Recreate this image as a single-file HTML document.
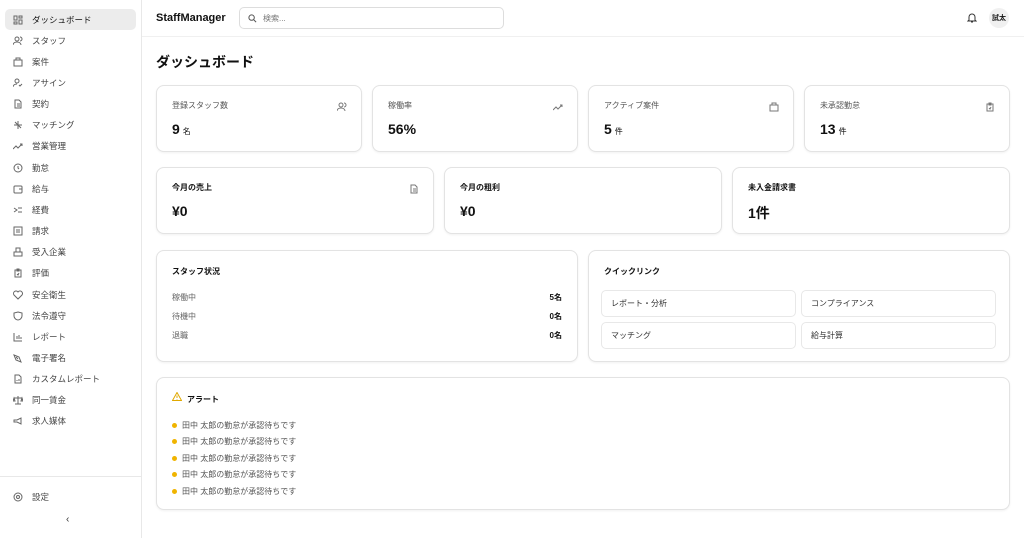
<!DOCTYPE html>
<html><head><meta charset="utf-8"><style>
*{box-sizing:border-box;margin:0;padding:0}
body{width:1024px;height:538px;overflow:hidden;background:#fff;font-family:"Liberation Sans","Noto Sans CJK JP",sans-serif;color:#111;position:relative}
.sb{position:absolute;left:0;top:0;width:142px;height:538px;border-right:1px solid #e8e8e8;background:#fff}
.it{position:absolute;left:5px;width:131px;height:21px;display:flex;align-items:center;padding-left:8px;font-size:8.5px;color:#444}
.it.act{background:#ececec;border-radius:5px;color:#111}
.it svg{width:10px;height:10px;margin-right:9px;stroke:#666;fill:none;stroke-width:1}
.hd{position:absolute;left:142px;top:0;right:0;height:37px;border-bottom:1px solid #f0f0f0}
.card{position:absolute;border:1px solid #e3e3e3;border-radius:8px;background:#fff;box-shadow:0 1px 2px rgba(0,0,0,.06)}
.lbl{position:absolute;left:15px;top:14px;font-size:8px;color:#555}
.val{position:absolute;left:15px;top:35px;font-size:14px;font-weight:bold}
.val small{font-size:8px;font-weight:normal;margin-left:3px}
.ic{position:absolute;right:14px;top:16px;width:10px;height:10px;stroke:#777;fill:none;stroke-width:1}
.ttl{position:absolute;left:15px;font-size:8px;font-weight:bold}
.row{position:absolute;left:15px;right:15px;font-size:8px;color:#666;display:flex;justify-content:space-between}
.row b{color:#111}
.ql{position:absolute;border:1px solid #e8e8e8;border-radius:5px;font-size:8px;padding-left:9px;display:flex;align-items:center;color:#333}
.al{position:absolute;left:15px;font-size:8px;color:#555;display:flex;align-items:center}
.al i{width:5px;height:5px;border-radius:50%;background:#f0b400;margin-right:5px;display:inline-block}
</style></head><body>
<div class="sb">
<div class="it act" style="top:9px"><svg viewBox="0 0 10 10"><rect x="1" y="1" width="3" height="4"/><rect x="6" y="1" width="3" height="2"/><rect x="6" y="5" width="3" height="4"/><rect x="1" y="7" width="3" height="2"/></svg>ダッシュボード</div>
<div class="it" style="top:30px"><svg viewBox="0 0 10 10"><circle cx="4" cy="3" r="2"/><path d="M0 9c0-2 2-3 4-3s4 1 4 3M7 1a2 2 0 010 4"/></svg>スタッフ</div>
<div class="it" style="top:51px"><svg viewBox="0 0 10 10"><rect x="1" y="3" width="8" height="6"/><path d="M3 3V1h4v2"/></svg>案件</div>
<div class="it" style="top:72px"><svg viewBox="0 0 10 10"><circle cx="4" cy="3" r="2"/><path d="M0 9c0-2 2-3 4-3M6 7l1 1 2-2"/></svg>アサイン</div>
<div class="it" style="top:93px"><svg viewBox="0 0 10 10"><path d="M2 1h4l2 2v6H2zM4 5h3M4 7h3"/></svg>契約</div>
<div class="it" style="top:114px"><svg viewBox="0 0 10 10"><path d="M5 1v8M1 5h8M2 2l6 6"/></svg>マッチング</div>
<div class="it" style="top:135px"><svg viewBox="0 0 10 10"><path d="M0 8l3-3 2 2 4-4M7 3h2v2"/></svg>営業管理</div>
<div class="it" style="top:157px"><svg viewBox="0 0 10 10"><circle cx="5" cy="5" r="4"/><path d="M5 3v2l1 1"/></svg>勤怠</div>
<div class="it" style="top:178px"><svg viewBox="0 0 10 10"><rect x="1" y="2" width="8" height="7" rx="1"/><path d="M6 5h3"/></svg>給与</div>
<div class="it" style="top:199px"><svg viewBox="0 0 10 10"><path d="M1 3l3 2-3 2M5 3h4M5 7h4"/></svg>経費</div>
<div class="it" style="top:220px"><svg viewBox="0 0 10 10"><rect x="1" y="1" width="8" height="8"/><path d="M3 4h4M3 6h4"/></svg>請求</div>
<div class="it" style="top:241px"><svg viewBox="0 0 10 10"><path d="M1 9V5h8v4zM3 5V1h4v4"/></svg>受入企業</div>
<div class="it" style="top:262px"><svg viewBox="0 0 10 10"><rect x="2" y="2" width="6" height="7"/><path d="M4 1h2v2H4zM4 6l1 1 1-2"/></svg>評価</div>
<div class="it" style="top:284px"><svg viewBox="0 0 10 10"><path d="M5 9L1 5a2 2 0 014-3 2 2 0 014 3z"/></svg>安全衛生</div>
<div class="it" style="top:305px"><svg viewBox="0 0 10 10"><path d="M5 1l4 1v3c0 2-2 4-4 4S1 7 1 5V2z"/></svg>法令遵守</div>
<div class="it" style="top:326px"><svg viewBox="0 0 10 10"><path d="M1 1v8h8M4 7V4M6 7V3M8 7V5"/></svg>レポート</div>
<div class="it" style="top:347px"><svg viewBox="0 0 10 10"><path d="M1 2l5 2 2 5-5-2zM3 4l2 2"/></svg>電子署名</div>
<div class="it" style="top:368px"><svg viewBox="0 0 10 10"><path d="M2 1h4l2 2v6H2zM4 7V6M6 7V5"/></svg>カスタムレポート</div>
<div class="it" style="top:389px"><svg viewBox="0 0 10 10"><path d="M5 1v8M2 9h6M1 3h8M1 3l-1 3h2zM9 3l-1 3h2z"/></svg>同一賃金</div>
<div class="it" style="top:410px"><svg viewBox="0 0 10 10"><path d="M1 4h3l4-2v6L4 6H1z"/></svg>求人媒体</div>
<div style="position:absolute;left:0;right:0;top:476px;border-top:1px solid #e8e8e8"></div>
<div class="it" style="top:486px"><svg viewBox="0 0 10 10"><circle cx="5" cy="5" r="1.5"/><circle cx="5" cy="5" r="4"/></svg>設定</div>
<div style="position:absolute;left:66px;top:514px;font-size:10px;color:#333">‹</div>
</div>
<div class="hd">
<div style="position:absolute;left:14px;top:12px;font-size:11px;font-weight:bold">StaffManager</div>
<div style="position:absolute;left:97px;top:7px;width:265px;height:22px;border:1px solid #ddd;border-radius:5px;font-size:8px;color:#777;display:flex;align-items:center;padding-left:8px"><svg width="9" height="9" viewBox="0 0 10 10" style="margin-right:6px;stroke:#555;fill:none;stroke-width:1.1"><circle cx="4" cy="4" r="3"/><path d="M6.5 6.5L9 9"/></svg>検索...</div>
<svg style="position:absolute;left:825px;top:13px" width="10" height="10" viewBox="0 0 10 10" fill="none" stroke="#333" stroke-width="1"><path d="M2 7V4a3 3 0 016 0v3l1 1H1zM4 9h2"/></svg>
<div style="position:absolute;left:847px;top:8px;width:20px;height:20px;border-radius:50%;background:#f0f0f0;font-size:7px;font-weight:bold;display:flex;align-items:center;justify-content:center">試太</div>
</div>
<div style="position:absolute;left:156px;top:52px;font-size:14px;font-weight:bold">ダッシュボード</div>

<div class="card" style="left:156px;top:85px;width:206px;height:67px"><div class="lbl">登録スタッフ数</div><div class="val">9<small>名</small></div><svg class="ic" viewBox="0 0 10 10"><circle cx="4" cy="3" r="2"/><path d="M0 9c0-2 2-3 4-3s4 1 4 3M7 1a2 2 0 010 4"/></svg></div>
<div class="card" style="left:372px;top:85px;width:206px;height:67px"><div class="lbl">稼働率</div><div class="val">56%</div><svg class="ic" viewBox="0 0 10 10"><path d="M0 8l3-3 2 2 4-4M7 3h2v2"/></svg></div>
<div class="card" style="left:588px;top:85px;width:206px;height:67px"><div class="lbl">アクティブ案件</div><div class="val">5<small>件</small></div><svg class="ic" viewBox="0 0 10 10"><rect x="1" y="3" width="8" height="6"/><path d="M3 3V1h4v2"/></svg></div>
<div class="card" style="left:804px;top:85px;width:206px;height:67px"><div class="lbl">未承認勤怠</div><div class="val">13<small>件</small></div><svg class="ic" viewBox="0 0 10 10"><rect x="2" y="2" width="6" height="7"/><path d="M4 1h2v2H4zM4 6l1 1 1-2"/></svg></div>

<div class="card" style="left:156px;top:167px;width:278px;height:67px"><div class="lbl" style="color:#111;font-weight:bold">今月の売上</div><div class="val">¥0</div><svg class="ic" viewBox="0 0 10 10"><path d="M2 1h4l2 2v6H2zM4 5h3M4 7h3"/></svg></div>
<div class="card" style="left:444px;top:167px;width:278px;height:67px"><div class="lbl" style="color:#111;font-weight:bold">今月の粗利</div><div class="val">¥0</div></div>
<div class="card" style="left:732px;top:167px;width:278px;height:67px"><div class="lbl" style="color:#111;font-weight:bold">未入金請求書</div><div class="val">1件</div></div>

<div class="card" style="left:156px;top:250px;width:422px;height:112px">
<div class="ttl" style="top:15px">スタッフ状況</div>
<div class="row" style="top:41px"><span>稼働中</span><b>5名</b></div>
<div class="row" style="top:60px"><span>待機中</span><b>0名</b></div>
<div class="row" style="top:79px"><span>退職</span><b>0名</b></div>
</div>
<div class="card" style="left:588px;top:250px;width:422px;height:112px">
<div class="ttl" style="top:15px">クイックリンク</div>
<div class="ql" style="left:12px;top:39px;width:195px;height:27px">レポート・分析</div>
<div class="ql" style="left:212px;top:39px;width:195px;height:27px">コンプライアンス</div>
<div class="ql" style="left:12px;top:71px;width:195px;height:27px">マッチング</div>
<div class="ql" style="left:212px;top:71px;width:195px;height:27px">給与計算</div>
</div>
<div class="card" style="left:156px;top:377px;width:854px;height:133px">
<svg style="position:absolute;left:15px;top:14px" width="10" height="9" viewBox="0 0 10 9" fill="none" stroke="#e0a800" stroke-width="1"><path d="M5 .5L9.5 8.5H.5z M5 3.5v2.5M5 7v.5"/></svg>
<div class="ttl" style="top:16px;left:30px">アラート</div>
<div class="al" style="top:42px"><i></i>田中 太郎の勤怠が承認待ちです</div>
<div class="al" style="top:58px"><i></i>田中 太郎の勤怠が承認待ちです</div>
<div class="al" style="top:75px"><i></i>田中 太郎の勤怠が承認待ちです</div>
<div class="al" style="top:91px"><i></i>田中 太郎の勤怠が承認待ちです</div>
<div class="al" style="top:108px"><i></i>田中 太郎の勤怠が承認待ちです</div>
</div>
</body></html>
